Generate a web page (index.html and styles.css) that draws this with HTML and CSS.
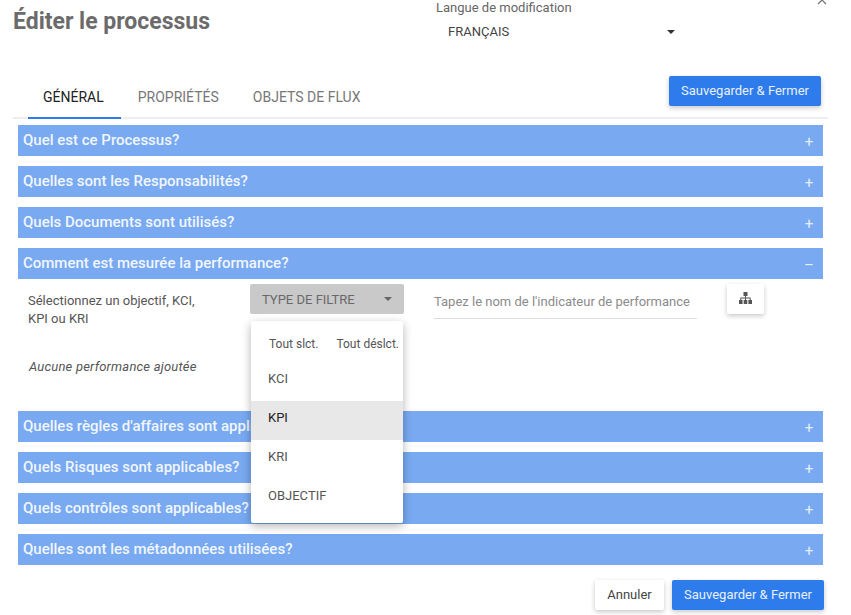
FILE: index.html
```html
<!DOCTYPE html>
<html lang="fr">
<head>
<meta charset="utf-8">
<title>Éditer le processus</title>
<link rel="stylesheet" href="styles.css">
</head>
<body>
<div class="dialog">
  <header class="head">
    <h1 class="title">Éditer le processus</h1>
    <div class="lang">
      <div class="lang-label">Langue de modification</div>
      <div class="lang-select"><span>FRANÇAIS</span><i class="caret dark"></i></div>
    </div>
    <svg class="close" width="10" height="10" viewBox="0 0 10 10"><path d="M1 1l8 8M9 1l-8 8" stroke="#777" stroke-width="1.3" fill="none"/></svg>
  </header>
  <div class="tabbar">
    <div class="tab active">GÉNÉRAL</div>
    <div class="tab">PROPRIÉTÉS</div>
    <div class="tab">OBJETS DE FLUX</div>
    <button class="btn primary top-save">Sauvegarder &amp; Fermer</button>
  </div>
  <div class="accordion">
    <div class="bar"><span>Quel est ce Processus?</span><b class="sign">+</b></div>
    <div class="bar"><span>Quelles sont les Responsabilités?</span><b class="sign">+</b></div>
    <div class="bar"><span>Quels Documents sont utilisés?</span><b class="sign">+</b></div>
    <div class="section">
      <div class="bar"><span>Comment est mesurée la performance?</span><b class="sign minus">–</b></div>
      <div class="panel">
        <div class="panel-row">
          <div class="hint">Sélectionnez un objectif, KCI, KPI ou KRI</div>
          <div class="filter-wrap">
            <div class="filter"><span>TYPE DE FILTRE</span><i class="caret"></i></div>
            <div class="menu">
              <div class="menu-actions"><span>Tout slct.</span><span>Tout déslct.</span></div>
              <div class="menu-item">KCI</div>
              <div class="menu-item selected">KPI</div>
              <div class="menu-item">KRI</div>
              <div class="menu-item">OBJECTIF</div>
            </div>
          </div>
          <div class="search">Tapez le nom de l'indicateur de performance</div>
          <button class="icon-btn" aria-label="Hiérarchie">
            <svg class="tree" width="13" height="12" viewBox="0 0 13 12"><path d="M4.500 0h4v4h-4zM0 8h3.600v4H0zM4.700 8h3.600v4H4.700zM9.400 8H13v4H9.400zM6 4h1v1.500h4.700V8h-1V6.500H7V8H6V6.500H2.300V8h-1V5.500H6z" fill="#555"/></svg>
          </button>
        </div>
        <div class="empty">Aucune performance ajoutée</div>
      </div>
    </div>
    <div class="bar"><span>Quelles règles d'affaires sont applicables?</span><b class="sign">+</b></div>
    <div class="bar"><span>Quels Risques sont applicables?</span><b class="sign">+</b></div>
    <div class="bar"><span>Quels contrôles sont applicables?</span><b class="sign">+</b></div>
    <div class="bar"><span>Quelles sont les métadonnées utilisées?</span><b class="sign">+</b></div>
  </div>
  <footer class="foot">
    <button class="btn plain">Annuler</button>
    <button class="btn primary">Sauvegarder &amp; Fermer</button>
  </footer>
</div>
</body>
</html>
```
FILE: styles.css
```css
* { box-sizing: border-box; }
html, body { margin: 0; height: 100%; overflow: hidden; background: #fff; }
body { font-family: Roboto, "Liberation Sans", sans-serif; color: #555; font-size: 13px; }
.dialog { width: 851px; height: 615px; }

.head { height: 75px; display: flex; position: relative; }
.title { margin: 9px 0 0 13px; width: 423px; font-size: 23px; line-height: 26px; font-weight: 700; color: #6b6b6b; }
.lang { width: 239px; }
.lang-label { font-size: 13px; line-height: 15px; color: #666; }
.lang-select { margin-top: 9px; padding: 0 0 0 12px; height: 16px; line-height: 16px; font-size: 13px; color: #444; display: flex; justify-content: space-between; align-items: center; }
.close { position: absolute; left: 817px; top: -5px; }

.caret { width: 0; height: 0; border-left: 4px solid transparent; border-right: 4px solid transparent; border-top: 4px solid #666; }
.caret.dark { border-top-color: #333; }

.tabbar { margin-left: 13px; width: 815px; height: 44px; border-bottom: 2px solid #eee; display: flex; position: relative; padding-left: 15px; }
.tab { padding: 0 15px; margin-right: 4px; font-size: 14px; line-height: 44px; height: 44px; color: #777; }
.tab.active { color: #222; border-bottom: 2px solid #2e7bec; padding-right: 17px; margin-right: 2px; }
.top-save { position: absolute; top: 1px; left: 656px; }

.btn { height: 30px; border: 0; border-radius: 2px; font: 13px/30px Roboto, "Liberation Sans", sans-serif; padding: 0; box-shadow: 0 2px 5px rgba(0,0,0,.22); }
.btn.primary { background: #2e7bec; color: #e8f0fd; width: 152px; }
.btn.plain { background: #fff; color: #444; width: 69px; }

.accordion { margin: 6px 0 0 18px; width: 805px; display: flex; flex-direction: column; gap: 10px; }
.bar { height: 31px; background: #78a9f1; color: #f1f6fe; display: flex; justify-content: space-between; align-items: center; padding: 0 9px 2px 5px; font-size: 15px; font-weight: 500; }
.sign { font-weight: 400; font-size: 15px; color: #e4eefc; width: 10px; text-align: center; margin-top: 4px; }

.panel { height: 122px; position: relative; padding: 5px 0 0 10px; }
.panel-row { display: flex; align-items: flex-start; }
.hint { width: 222px; padding: 8px 50px 0 0; font-size: 13px; line-height: 18px; color: #555; }
.filter-wrap { width: 154px; position: relative; }
.filter { height: 30px; background: #c9c9c9; border-radius: 2px; display: flex; justify-content: space-between; align-items: center; padding: 0 12px; font-size: 13px; color: #686868; }
.menu { position: absolute; z-index: 5; left: 1px; top: 37px; width: 152px; height: 202px; background: #fff; border-radius: 2px; box-shadow: 0 3px 10px rgba(0,0,0,.3); font-size: 13px; color: #555; }
.menu-actions { height: 41px; padding: 15px 0 0 18px; display: flex; gap: 18px; white-space: nowrap; line-height: 16px; font-size: 12px; color: #555; }
.menu-item { height: 39px; line-height: 34px; padding-left: 17px; }
.menu-item.selected { background: #e8e8e8; color: #222; }

.search { margin-left: 30px; width: 263px; height: 35px; border-bottom: 1px solid #ddd; font-size: 13px; line-height: 35px; color: #8b8b8b; white-space: nowrap; }
.icon-btn { margin-left: 30px; width: 37px; height: 30px; border: 0; background: #fff; border-radius: 2px; box-shadow: 0 2px 5px rgba(0,0,0,.22); padding: 0 0 2px; display: flex; align-items: center; justify-content: center; }
.empty { margin: 30px 0 0 1px; font-size: 13px; font-style: italic; line-height: 18px; color: #555; letter-spacing: .2px; }

.foot { margin: 15px 0 0 595px; width: 229px; display: flex; justify-content: space-between; }
```
